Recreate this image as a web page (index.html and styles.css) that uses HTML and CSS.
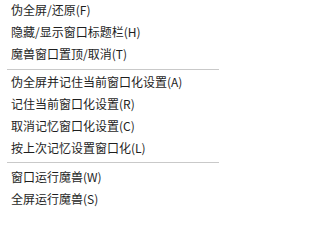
FILE: index.html
```html
<!DOCTYPE html>
<html lang="zh-CN">
<head>
<meta charset="utf-8">
<link rel="stylesheet" href="styles.css">
</head>
<body>
<div class="menu">
  <div class="item">伪全屏/还原(F)</div>
  <div class="item">隐藏/显示窗口标题栏(H)</div>
  <div class="item">魔兽窗口置顶/取消(T)</div>
  <div class="sep sep-a"></div>
  <div class="item">伪全屏并记住当前窗口化设置(A)</div>
  <div class="item">记住当前窗口化设置(R)</div>
  <div class="item">取消记忆窗口化设置(C)</div>
  <div class="item">按上次记忆设置窗口化(L)</div>
  <div class="sep sep-b"></div>
  <div class="item">窗口运行魔兽(W)</div>
  <div class="item">全屏运行魔兽(S)</div>
</div>
</body>
</html>
```
FILE: styles.css
```css
html, body {
  margin: 0;
  padding: 0;
  background: #ffffff;
}
.menu {
  width: 219px;
  height: 211px;
  overflow: hidden;
  background: #ffffff;
  display: flex;
  flex-direction: column;
  margin-top: -1px;
  font-family: "Noto Sans CJK SC", "Noto Sans", sans-serif;
  font-size: 12px;
  color: #1e1e1e;
}
.item {
  height: 22px;
  line-height: 22px;
  padding-left: 11px;
  white-space: nowrap;
  flex: none;
}
.sep {
  flex: none;
  height: 1px;
  background: #c9c9c9;
  margin-left: 7px;
}
.sep-a {
  margin-top: 4px;
  margin-bottom: 1px;
}
.sep-b {
  margin-top: 3px;
  margin-bottom: 3px;
}
```
